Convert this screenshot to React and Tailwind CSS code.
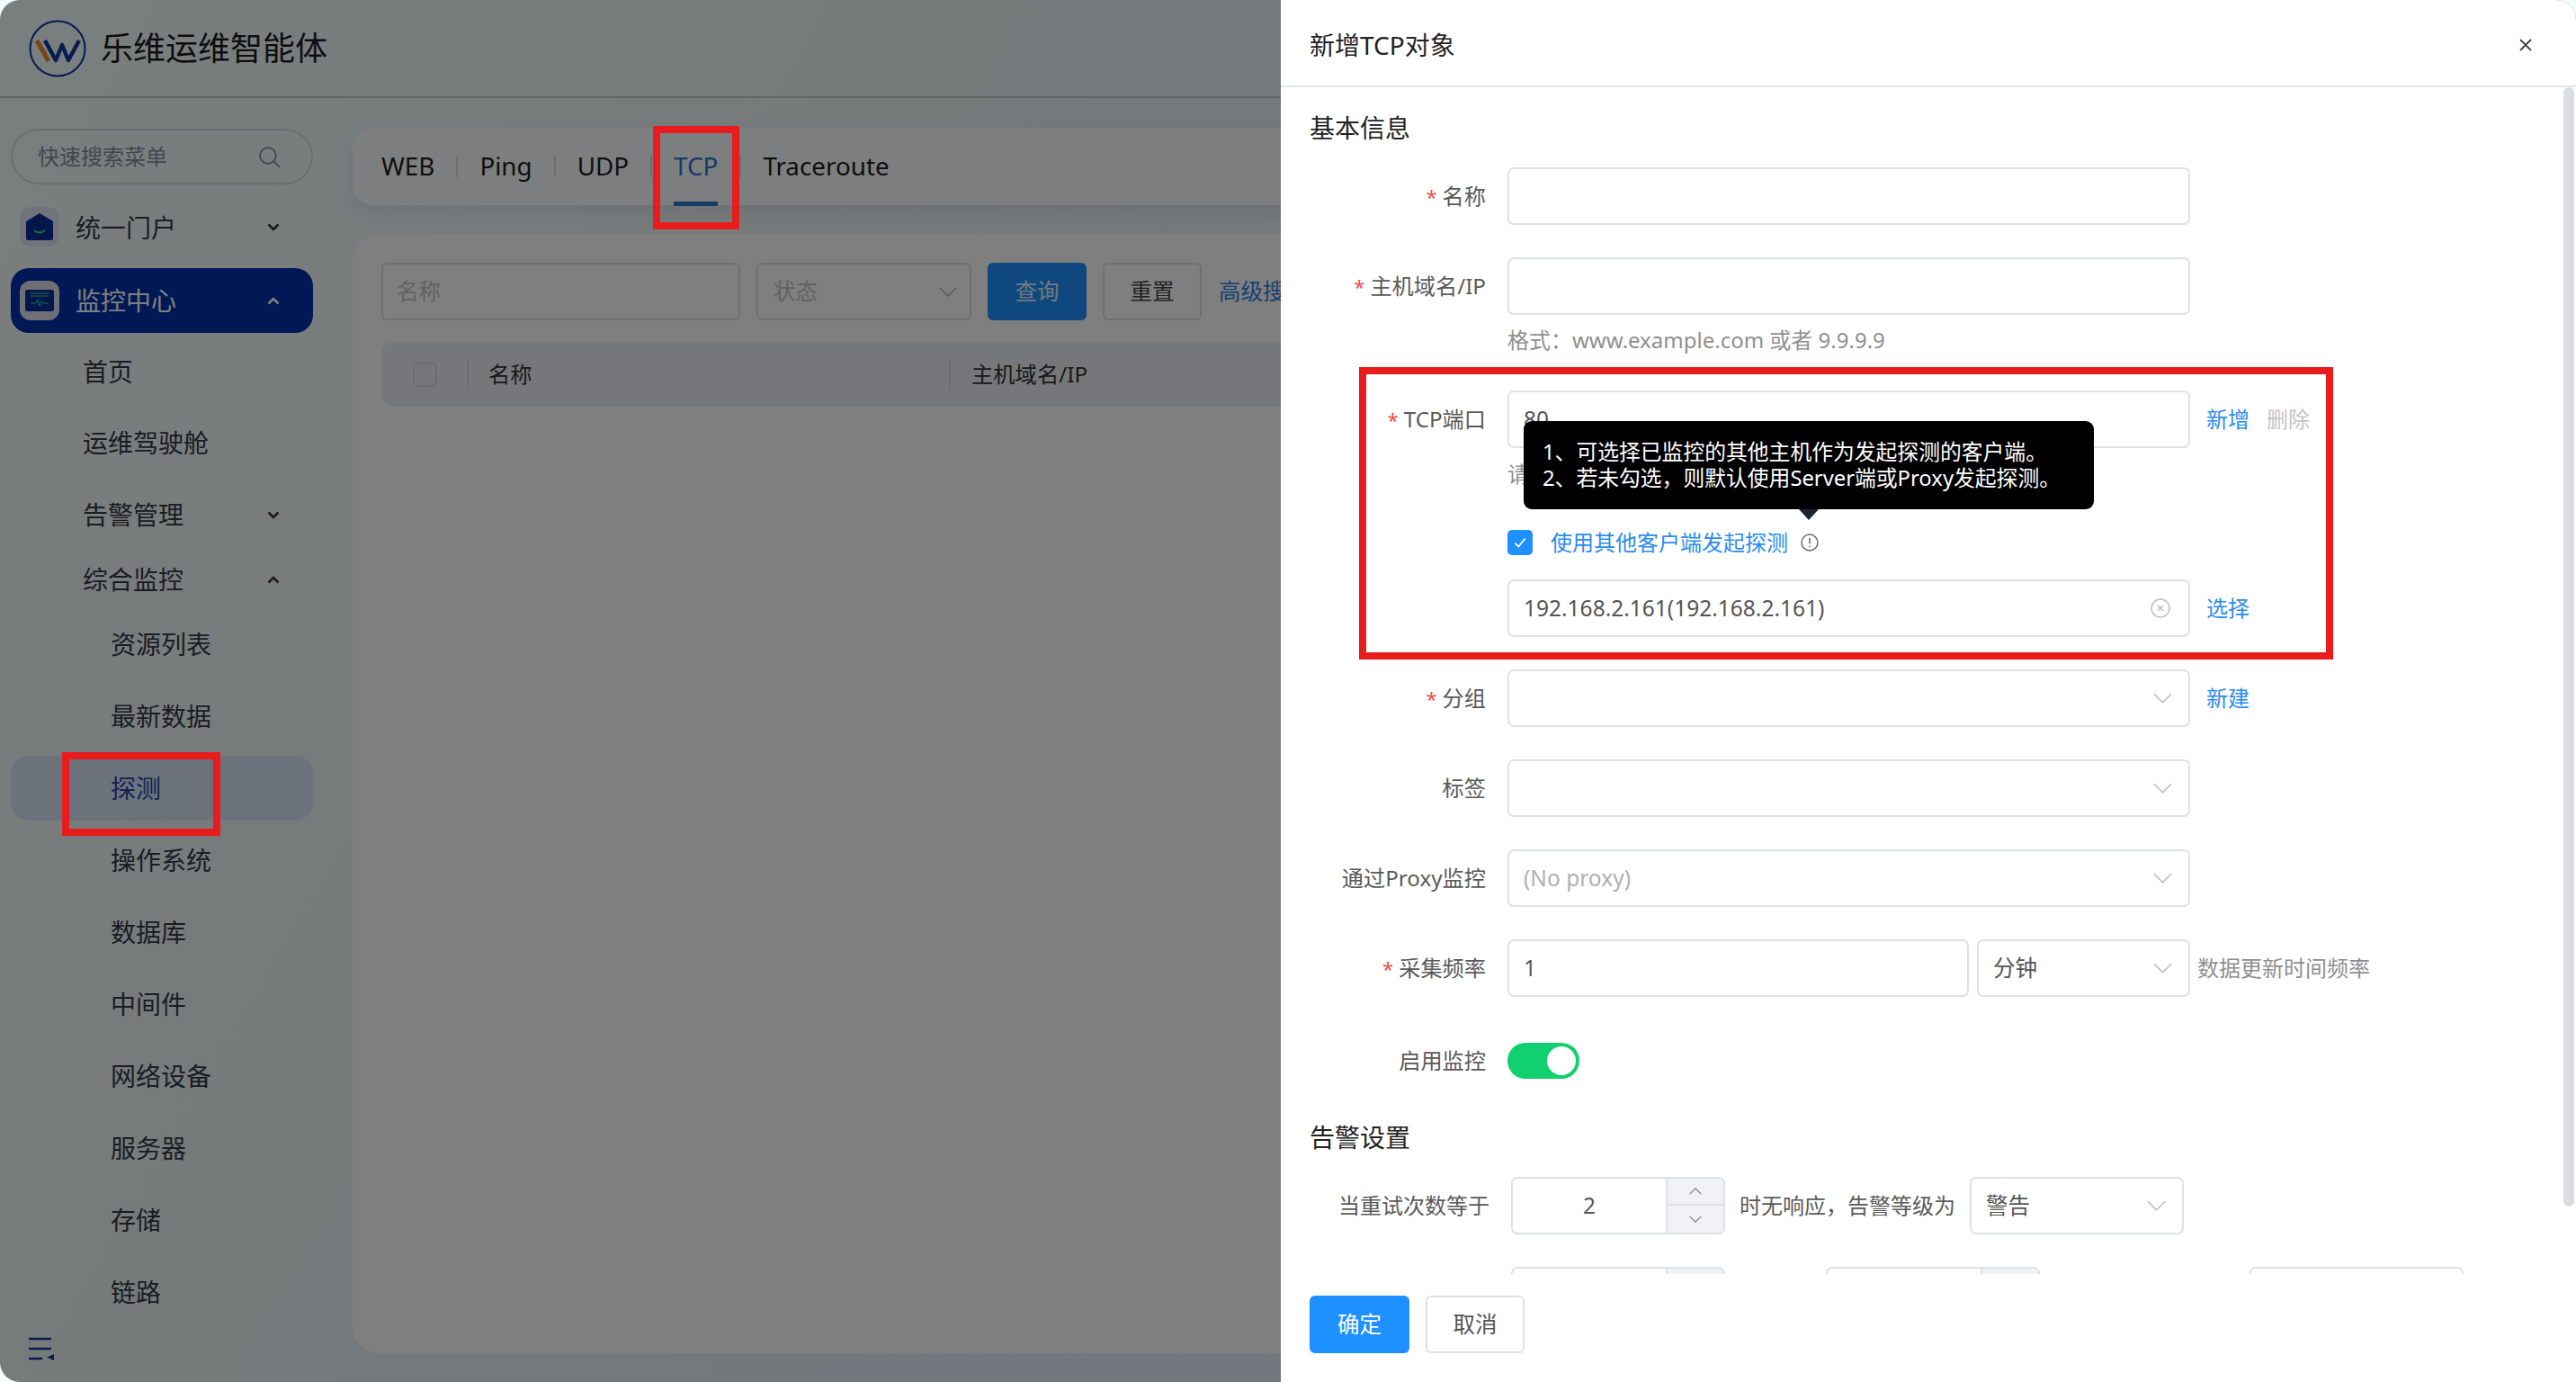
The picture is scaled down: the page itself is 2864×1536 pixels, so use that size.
import React from "react";

const Chevron = ({ up = false, className = "" }) => (
  <svg viewBox="0 0 22 12" className={className} fill="none" stroke="currentColor" strokeWidth="1.6">
    <polyline points={up ? "1,11 11,1 21,11" : "1,1 11,11 21,1"} />
  </svg>
);

const SmallChevron = ({ up = false, className = "" }) => (
  <svg viewBox="0 0 14 9" className={className} fill="none" stroke="currentColor" strokeWidth="2.6">
    <polyline points={up ? "1.5,7.5 7,2 12.5,7.5" : "1.5,1.5 7,7 12.5,1.5"} />
  </svg>
);

const Logo = () => (
  <svg viewBox="0 0 64 64" className="w-[64px] h-[64px] shrink-0" fill="none">
    <circle cx="32" cy="32" r="30.5" stroke="#0d3aa0" strokeWidth="2" />
    <path d="M9 23 L22 46" stroke="#f08a24" strokeWidth="5" />
    <path d="M18 23 L30 45 L37 28 L44 45 L56 23" stroke="#0d3aa0" strokeWidth="4.5" strokeLinejoin="round" />
  </svg>
);

const HomeIcon = () => (
  <div className="w-[44px] h-[44px] rounded-[12px] bg-[#e2e6f4] flex items-center justify-center shrink-0">
    <svg viewBox="0 0 30 30" className="w-[30px] h-[30px]">
      <path d="M15 0 L30 9 L30 28 Q30 30 28 30 L2 30 Q0 30 0 28 L0 9 Z" fill="#0a2c96" />
      <path d="M9 19 Q15 24 21 19" stroke="#2fe0a0" strokeWidth="2" fill="none" />
    </svg>
  </div>
);

const MonitorIcon = () => (
  <div className="w-[44px] h-[44px] rounded-[12px] bg-[#dde1ec] flex items-center justify-center shrink-0">
    <svg viewBox="0 0 32 24" className="w-[32px] h-[24px]">
      <rect width="32" height="24" rx="2.5" fill="#0a2c96" />
      <path d="M6 4 H26 M6 7 H26" stroke="#2fe0a0" strokeWidth="1" />
      <path d="M6 15 H12 L14 11 L16 18 L18 13 L20 15 H26" stroke="#2fe0a0" strokeWidth="1" fill="none" />
    </svg>
  </div>
);

const Sub = ({ children, active = false, first = false }) => (
  <div className={`h-[72px] pl-[111px] flex items-center rounded-[20px] text-[28px] leading-none ${first ? "" : "mt-2"} ${active ? "bg-[#d8e4f8] text-[#1f45a8]" : "text-[#333a44]"}`}>
    {children}
  </div>
);

const Level2 = ({ children, chevron, className = "" }) => (
  <div className={`h-[72px] pl-[80px] pr-[37px] flex items-center justify-between text-[28px] leading-none text-[#333a44] ${className}`}>
    <span>{children}</span>
    {chevron && <SmallChevron up={chevron === "up"} className="w-[14px] h-[9px] text-[#333]" />}
  </div>
);

const Sidebar = () => (
  <aside className="w-[392px] shrink-0 pl-[12px] pr-[44px] pt-[34px]">
    <div className="h-[62px] rounded-full border-2 border-[#d8dde0] flex items-center justify-between pl-[28px] pr-[34px] text-[24px] text-[#888e94]">
      <span>快速搜索菜单</span>
      <svg viewBox="0 0 24 24" className="w-[25px] h-[25px]" fill="none" stroke="#8a8f94" strokeWidth="1.8">
        <circle cx="10.5" cy="10.5" r="8.5" />
        <path d="M17 17 L23 23" />
      </svg>
    </div>
    <div className="h-[72px] mt-[11px] pl-[10px] pr-[37px] flex items-center text-[28px] text-[#333a44]">
      <HomeIcon />
      <span className="ml-[18px] mt-[2px] flex-1 leading-none">统一门户</span>
      <SmallChevron className="w-[14px] h-[9px] text-[#333]" />
    </div>
    <div className="h-[72px] mt-[10px] pl-[10px] pr-[37px] flex items-center rounded-[20px] bg-[#0031ac] text-[28px] text-white">
      <MonitorIcon />
      <span className="ml-[18px] flex-1 leading-none">监控中心</span>
      <SmallChevron up className="w-[14px] h-[9px] text-white" />
    </div>
    <Level2 className="mt-[7px]">首页</Level2>
    <Level2 className="mt-[7px]">运维驾驶舱</Level2>
    <Level2 className="mt-2" chevron="down">告警管理</Level2>
    <Level2 chevron="up">综合监控</Level2>
    <Sub first>资源列表</Sub>
    <Sub>最新数据</Sub>
    <Sub active>探测</Sub>
    <Sub>操作系统</Sub>
    <Sub>数据库</Sub>
    <Sub>中间件</Sub>
    <Sub>网络设备</Sub>
    <Sub>服务器</Sub>
    <Sub>存储</Sub>
    <Sub>链路</Sub>
    <svg viewBox="0 0 28 26" className="w-[28px] h-[26px] ml-[20px] mt-[14px]" fill="none">
      <path d="M0 2 H25 M0 13 H25 M0 24 H15" stroke="#0d3aa0" strokeWidth="2.4" />
      <path d="M28 19 V26 L20 22.5 Z" fill="#0d3aa0" />
    </svg>
  </aside>
);

const Tab = ({ children, active }) => (
  <span className={`relative ${active ? "text-[#2f74cf]" : "text-[#1c1c1c]"}`}>
    {children}
    {active && <span className="absolute left-0 right-0 top-[60px] h-[5px] bg-[#2f74cf]" />}
  </span>
);

const Sep = () => <span className="w-[2px] h-[24px] bg-[#d9dbde]" />;

const Main = () => (
  <main className="flex-1 pr-[24px] pt-[33px] min-w-0">
    <div className="h-[86px] rounded-[22px] bg-[#fbfdfe] shadow-[0_8px_20px_rgba(70,90,130,0.12)] flex items-center gap-6 pl-[32px] text-[27.8px]">
      <Tab>WEB</Tab><Sep />
      <Tab>Ping</Tab><Sep />
      <Tab>UDP</Tab><Sep />
      <Tab active>TCP</Tab><Sep />
      <Tab>Traceroute</Tab>
    </div>
    <div className="h-[1244px] mt-[32px] rounded-[30px] bg-white px-[32px] pt-[32px]">
      <div className="flex text-[24.5px]">
        <div className="w-[399px] h-[64px] border-2 border-[#dfe1e4] rounded-[6px] flex items-center pl-[15px] text-[#c4c4c4]">名称</div>
        <div className="w-[239px] h-[64px] ml-[18px] border-2 border-[#dfe1e4] rounded-[6px] flex items-center justify-between pl-[17px] pr-[14px] text-[#c4c4c4]">
          状态<Chevron className="w-[20px] h-[11px] text-[#b4b4b4]" />
        </div>
        <div className="w-[110px] h-[64px] ml-[18px] rounded-[6px] bg-[#1e90ff] text-white/90 flex items-center justify-center">查询</div>
        <div className="w-[110px] h-[64px] ml-[18px] border-2 border-[#dfe1e4] rounded-[6px] flex items-center justify-center text-[#444]">重置</div>
        <div className="ml-[19px] h-[64px] flex items-center text-[#2f80e0] whitespace-nowrap">高级搜索</div>
      </div>
      <div className="mt-[24px] h-[72px] rounded-[14px] bg-[#eceef5] flex items-center text-[24.3px] text-[#333]">
        <div className="w-[27px] h-[27px] ml-[35px] border-2 border-[#dcdde0] rounded-[5px]" />
        <span className="w-[2px] h-[36px] bg-[#dcdde0] ml-[33px]" />
        <span className="ml-[22px] w-[512px]">名称</span>
        <span className="w-[2px] h-[36px] bg-[#dcdde0]" />
        <span className="ml-[23px]">主机域名/IP</span>
      </div>
    </div>
  </main>
);

const box = "border-2 border-[#dfe1e4] rounded-[7px] bg-white flex items-center h-[64px] text-[24.5px] text-[#555]";

const Row = ({ label, required, className = "", children }) => (
  <div className={`flex items-center ${className}`}>
    <div className="w-[228px] shrink-0 text-right text-[24.2px] leading-none text-[#5a5a5a] whitespace-nowrap">
      {required && <span className="text-[#f04b4b] mr-[6px] text-[22px]">*</span>}
      {label}
    </div>
    <div className="ml-[24px] flex items-center">{children}</div>
  </div>
);

const Select = ({ className = "w-[759px]", value, disabled }) => (
  <div className={`${box} ${className} justify-between pl-[16px] pr-[18px] ${disabled ? "bg-[#f0f2f7] text-[#aeb0b4]" : ""}`}>
    <span>{value}</span>
    <Chevron className="w-[21px] h-[12px] text-[#b8b8b8]" />
  </div>
);

const NumberBox = ({ value, className = "w-[238px]" }) => (
  <div className={`${box} ${className} overflow-hidden justify-between`}>
    <span className="flex-1 text-center">{value}</span>
    <div className="w-[64px] h-full bg-[#f0f2f7] border-l-2 border-[#dfe1e4] flex flex-col text-[#777]">
      <div className="h-1/2 flex items-center justify-center border-b-2 border-[#dfe1e4]"><Chevron up className="w-[14px] h-[8px]" /></div>
      <div className="h-1/2 flex items-center justify-center"><Chevron className="w-[14px] h-[8px]" /></div>
    </div>
  </div>
);

const Link = ({ children, className = "" }) => (
  <span className={`text-[24px] leading-none text-[#2a8cf0] ${className}`}>{children}</span>
);

const Drawer = () => (
  <section className="absolute z-20 left-[1424px] top-0 w-[1440px] h-[1536px] bg-white rounded-r-[22px] flex flex-col">
    <header className="h-[97px] shrink-0 border-b-2 border-[#e5e6e8] flex items-center justify-between pl-[32px] pr-[48px] pt-[4px]">
      <span className="text-[28px] text-[#222] leading-none">新增TCP对象</span>
      <svg viewBox="0 0 16 16" className="w-[16px] h-[16px]" fill="none" stroke="#444" strokeWidth="1.8"><path d="M2 2 L14 14 M14 2 L2 14" /></svg>
    </header>
    <div className="relative flex-1 overflow-hidden">
      <div className="absolute right-[2px] top-0 w-[12px] h-[1244px] rounded-full bg-[#dcdde0]" />
      <h3 className="mt-[24px] ml-[32px] h-[40px] pt-[2px] flex items-center text-[28px] text-[#222] font-normal">基本信息</h3>
      <Row label="名称" required className="mt-[25px]"><div className={`${box} w-[759px]`} /></Row>
      <Row label="主机域名/IP" required className="mt-[36px]"><div className={`${box} w-[759px]`} /></Row>
      <div className="ml-[252px] mt-[12px] h-[32px] flex items-center text-[24px] text-[#8f8f8f]">格式：www.example.com 或者 9.9.9.9</div>
      <div className="relative">
        <Row label="TCP端口" required className="mt-[40px]">
          <div className={`${box} w-[759px] pl-[16px]`}>80</div>
          <Link className="ml-[18px]">新增</Link>
          <Link className="ml-[19px] !text-[#c4c4c4]">删除</Link>
        </Row>
        <div className="ml-[252px] mt-[13px] h-[32px] flex items-center text-[24px] text-[#8f8f8f]">请</div>
        <div className="ml-[252px] mt-[44px] h-[32px] flex items-center">
          <div className="w-[28px] h-[28px] rounded-[5px] bg-[#1e90ff] flex items-center justify-center">
            <svg viewBox="0 0 16 16" className="w-[18px] h-[18px]" fill="none" stroke="#fff" strokeWidth="1.6"><path d="M3 8.5 L6.5 12 L13 4" /></svg>
          </div>
          <Link className="ml-[20px]">使用其他客户端发起探测</Link>
          <svg viewBox="0 0 20 20" className="w-[20px] h-[20px] ml-[14px]" fill="none" stroke="#666" strokeWidth="1.4">
            <circle cx="10" cy="10" r="9" />
            <path d="M10 5 V11.5 M10 13.5 V15" />
          </svg>
        </div>
        <div className="ml-[252px] mt-[25px] flex items-center">
          <div className={`${box} w-[759px] pl-[16px] pr-[20px] justify-between`}>
            <span>192.168.2.161(192.168.2.161)</span>
            <svg viewBox="0 0 22 22" className="w-[22px] h-[22px]" fill="none" stroke="#bdbdbd" strokeWidth="1.5">
              <circle cx="11" cy="11" r="10" />
              <path d="M8 8 L14 14 M14 8 L8 14" />
            </svg>
          </div>
          <Link className="ml-[18px]">选择</Link>
        </div>
        <div className="absolute z-10 left-[270px] top-[34px] w-[634px] h-[98px] rounded-[9px] bg-black pl-[21px] pt-[20px] text-[23.8px] leading-[29px] text-white whitespace-nowrap">
          <div>1、可选择已监控的其他主机作为发起探测的客户端。</div>
          <div>2、若未勾选，则默认使用Server端或Proxy发起探测。</div>
          <div className="absolute left-[306px] top-[98px] w-0 h-0 border-x-[11px] border-x-transparent border-t-[12px] border-t-[#1d2530]" />
        </div>
      </div>
      <Row label="分组" required className="mt-[36px]">
        <Select />
        <Link className="ml-[18px]">新建</Link>
      </Row>
      <Row label="标签" className="mt-[36px]"><Select /></Row>
      <Row label="通过Proxy监控" className="mt-[36px]"><Select value="(No proxy)" disabled /></Row>
      <Row label="采集频率" required className="mt-[36px]">
        <div className={`${box} w-[513px] pl-[16px]`}>1</div>
        <Select className="w-[237px] ml-[9px]" value="分钟" />
        <span className="ml-[8px] text-[24px] text-[#8f8f8f] whitespace-nowrap">数据更新时间频率</span>
      </Row>
      <Row label="启用监控" className="mt-[51px]">
        <div className="w-[80px] h-[40px] rounded-full bg-[#10d070] relative">
          <div className="absolute right-[4px] top-[4px] w-[32px] h-[32px] rounded-full bg-white" />
        </div>
      </Row>
      <h3 className="mt-[45px] ml-[32px] h-[40px] flex items-center text-[28px] text-[#222] font-normal">告警设置</h3>
      <div className="mt-[24px] ml-[64px] flex items-center">
        <span className="w-[168px] text-[24px] text-[#5a5a5a] whitespace-nowrap">当重试次数等于</span>
        <NumberBox value="2" className="w-[238px] ml-[24px]" />
        <span className="ml-[16px] w-[240px] text-[24px] text-[#5a5a5a] whitespace-nowrap">时无响应，告警等级为</span>
        <Select className="w-[238px] ml-[16px]" value="警告" />
      </div>
      <div className="mt-[36px] flex items-center pl-[256px]">
        <NumberBox className="w-[238px]" />
        <NumberBox className="w-[238px] ml-[112px]" />
        <div className={`${box} w-[238px] ml-[233px]`} />
      </div>
    </div>
    <footer className="h-[120px] shrink-0 bg-white pt-[24px] pl-[32px] flex items-start text-[24.5px]">
      <div className="w-[111px] h-[64px] rounded-[6px] bg-[#1e90ff] text-white flex items-center justify-center">确定</div>
      <div className="w-[110px] h-[64px] ml-[18px] border-2 border-[#dfe1e4] rounded-[6px] flex items-center justify-center text-[#555]">取消</div>
    </footer>
  </section>
);

export default function App() {
  return (
    <div
      className="relative w-[2864px] h-[1536px] overflow-hidden bg-[#f4fbfb] text-[#222]"
      style={{ fontFamily: '"Noto Sans","Noto Sans CJK SC",sans-serif' }}
    >
      <div className="h-full rounded-[22px] bg-[linear-gradient(120deg,#f3fdff_0%,#eef4f6_30%,#e6eefc_55%,#f2f4f6_100%)] flex flex-col">
        <div className="h-[109px] shrink-0 border-b-2 border-[#c4cbcc] flex items-center pl-[32px]">
          <Logo />
          <span className="ml-[16px] text-[36px] leading-none text-[#1b1b1b]">乐维运维智能体</span>
        </div>
        <div className="flex flex-1 min-h-0">
          <Sidebar />
          <Main />
        </div>
      </div>
      <div className="absolute inset-0 z-10 bg-black/50 rounded-[22px]" />
      <Drawer />
      {/* annotation frames */}
      <div className="absolute z-30 left-[726px] top-[140px] w-[96px] h-[115px] border-[8px] border-[#e81c1c]" />
      <div className="absolute z-30 left-[69px] top-[836px] w-[176px] h-[93px] border-[8px] border-[#e81c1c]" />
      <div className="absolute z-30 left-[1511px] top-[408px] w-[1083px] h-[325px] border-[8px] border-[#e81c1c]" />
    </div>
  );
}
